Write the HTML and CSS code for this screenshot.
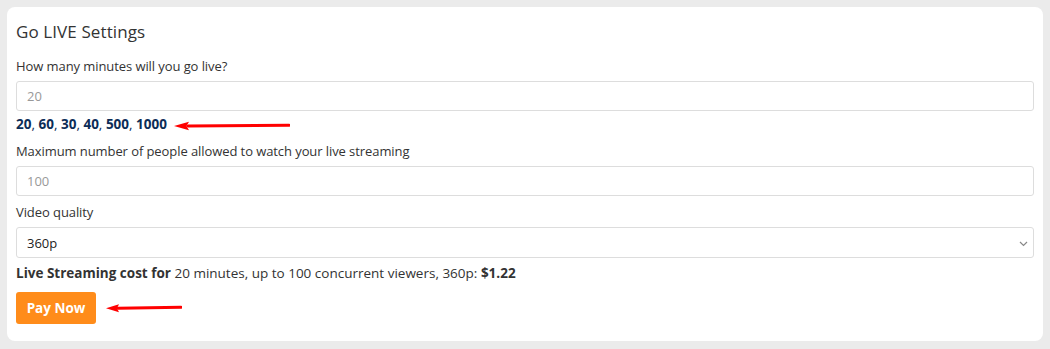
FILE: index.html
```html
<!DOCTYPE html>
<html>
<head>
<meta charset="utf-8">
<link rel="stylesheet" href="styles.css">
</head>
<body>
<div class="card">
  <h3 class="title">Go LIVE Settings</h3>
  <label class="label">How many minutes will you go live?</label>
  <input class="field" type="text" placeholder="20">
  <div class="presets-row">
    <div class="presets"><a>20</a>, <a>60</a>, <a>30</a>, <a>40</a>, <a>500</a>, <a>1000</a></div>
    <svg class="arrow arrow-1" width="116" height="10" viewBox="0 0 116 10"><path d="M14 5 L115 4.2" stroke="#f00" stroke-width="3" stroke-linecap="round"/><path d="M0 5 L15 0.8 L12.5 5 L15 9.2 Z" fill="#f00"/></svg>
  </div>
  <label class="label">Maximum number of people allowed to watch your live streaming</label>
  <input class="field field-2" type="text" placeholder="100">
  <label class="label">Video quality</label>
  <div class="select">
    <span>360p</span>
    <svg width="9" height="6" viewBox="0 0 9 6"><path d="M1 1 L4.5 4.5 L8 1" fill="none" stroke="#888" stroke-width="1.2"/></svg>
  </div>
  <p class="cost"><b>Live Streaming cost for</b> 20 minutes, up to 100 concurrent viewers, 360p: <b>$1.22</b></p>
  <div class="pay-row">
    <button class="pay">Pay Now</button>
    <svg class="arrow arrow-2" width="76" height="10" viewBox="0 0 76 10"><path d="M12 5.2 L75 4.2" stroke="#f00" stroke-width="3" stroke-linecap="round"/><path d="M0 5.2 L13 1.2 L11 5.2 L13 9.2 Z" fill="#f00"/></svg>
  </div>
</div>
</body>
</html>
```

FILE: styles.css
```css
html, body {
  margin: 0;
  padding: 0;
}
body {
  background: #ebebeb;
  font-family: "Open Sans", "Liberation Sans", sans-serif;
  color: #333;
  padding: 7px 7px 8px 7px;
}
.card {
  background: #fff;
  border-radius: 8px;
  padding: 13px 9px 17px 9px;
  display: flex;
  flex-direction: column;
  align-items: flex-start;
}
.title {
  font-size: 17px;
  font-weight: 400;
  margin: 0 0 13px 0;
  line-height: 24px;
  color: #333;
  letter-spacing: 0.1px;
}
.label {
  font-size: 13px;
  line-height: 18px;
  margin-bottom: 6px;
  color: #333;
  letter-spacing: -0.08px;
}
.field {
  box-sizing: border-box;
  width: 100%;
  height: 30px;
  border: 1px solid #ddd;
  border-radius: 3px;
  padding: 0 10px;
  font-family: inherit;
  font-size: 13px;
  margin: 0 0 4px 0;
  outline: none;
}
.field-2 {
  margin-bottom: 7px;
}
.field::placeholder {
  color: #999;
}
.presets-row {
  display: flex;
  align-items: center;
  gap: 7px;
  margin-bottom: 9px;
}
.presets {
  font-size: 13.5px;
  line-height: 18px;
  color: #0c2d57;
}
.presets a {
  font-weight: 700;
  color: #0c2d57;
}
.arrow {
  display: block;
}
.arrow-1 {
  margin-top: 3px;
}
.select {
  box-sizing: border-box;
  width: 100%;
  height: 31px;
  border: 1px solid #ddd;
  border-radius: 3px;
  padding: 0 5px 0 10px;
  display: flex;
  align-items: center;
  justify-content: space-between;
  font-size: 13px;
  color: #222;
  margin-bottom: 6px;
}
.select svg {
  margin-top: 2px;
}
.cost {
  font-size: 13.5px;
  line-height: 18px;
  margin: 0 0 10px 0;
  color: #333;
}
.cost b {
  font-weight: 700;
}
.pay-row {
  display: flex;
  align-items: center;
  gap: 10px;
}
.pay {
  background: #ff8c1a;
  color: #fff;
  border: none;
  border-radius: 3px;
  font-family: inherit;
  font-weight: 700;
  font-size: 13.5px;
  height: 32px;
  width: 80px;
  padding: 0;
}
```
